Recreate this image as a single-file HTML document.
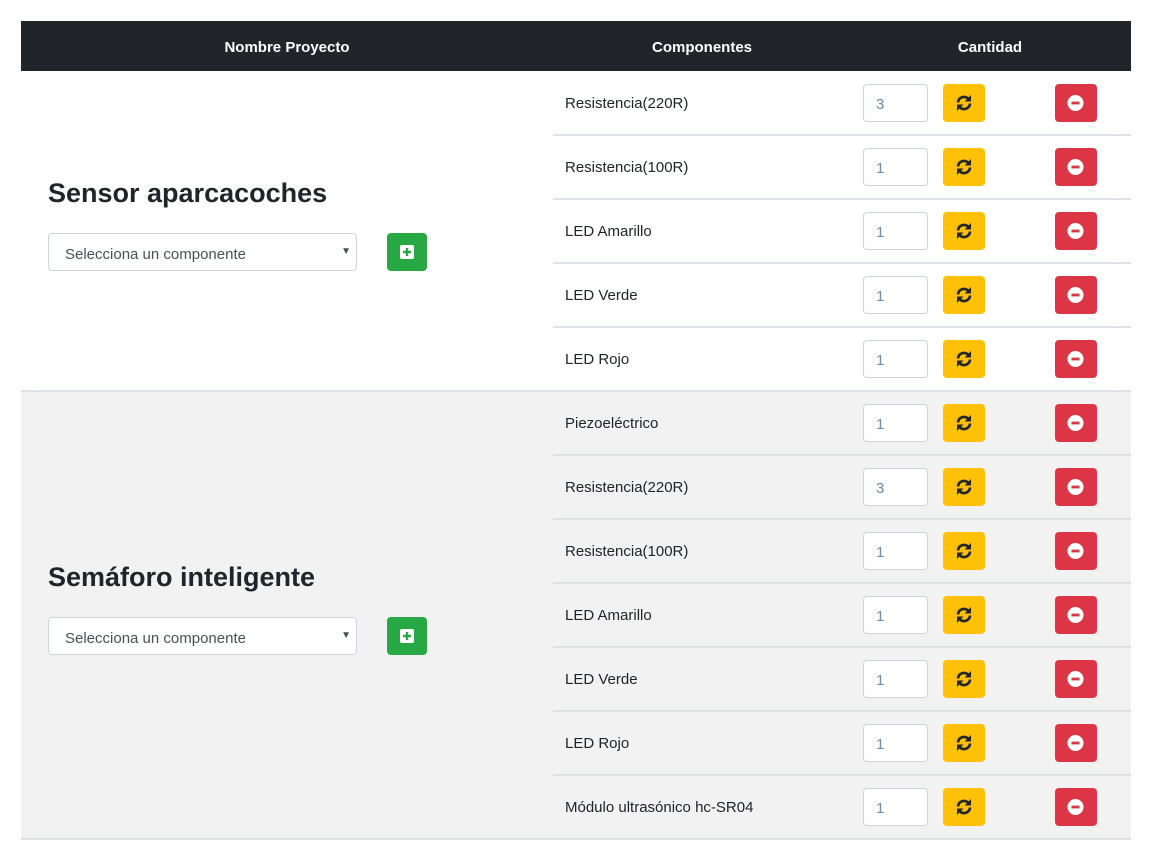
<!DOCTYPE html>
<html><head><meta charset="utf-8"><style>
body{margin:0;background:#fff;font-family:"Liberation Sans",sans-serif;color:#212529;}
.a{position:absolute}
.hd{left:21px;top:21px;width:1110px;height:50px;background:#212529;color:#fff;font-weight:bold;font-size:15px}
.hd span{position:absolute;top:18px;transform:translateX(-50%)}
.g2{left:21px;top:391px;width:1110px;height:448px;background:#f2f2f2}
.line{height:2px;background:#dee2e6}
.t{left:565px;font-size:15px}
.inp{left:863px;width:63px;height:36px;border:1px solid #ced4da;border-radius:4px;background:#fff;color:#6c8aa8;font-size:15px;box-sizing:content-box}
.inp span{position:absolute;left:12px;top:11px}
.ref{left:943px;width:42px;height:38px;background:#ffc107;border-radius:4px}
.del{left:1055px;width:42px;height:38px;background:#dc3545;border-radius:4px}
.ref svg,.del svg{position:absolute;left:12px;top:11px}
h2{position:absolute;left:48px;margin:0;font-size:27px;font-weight:bold;color:#212529}
.sel{left:48px;width:307px;height:36px;border:1px solid #ced4da;border-radius:4px;background:#fff;font-size:15px;color:#495057}
.sel span{position:absolute;left:16px;top:12px}
.sel i{position:absolute;right:5px;top:12px;font-style:normal;font-size:10px}
.add{left:387px;width:40px;height:38px;background:#28a745;border-radius:4px}
.add svg{position:absolute;left:13px;top:12px}
</style></head><body>
<div class="a hd"><span style="left:266px">Nombre Proyecto</span><span style="left:681px">Componentes</span><span style="left:969px">Cantidad</span></div>
<div class="a g2"></div>
<div class="a line" style="left:21px;top:390px;width:1110px"></div>
<div class="a line" style="left:21px;top:838px;width:1110px"></div>
<div id="rows"></div>
<h2 style="top:178px">Sensor aparcacoches</h2>
<div class="a sel" style="top:233px"><span>Selecciona un componente</span><i>▼</i></div>
<div class="a add" style="top:233px"><svg width="14" height="14" viewBox="0 0 14 14"><rect width="14" height="14" rx="2" fill="#fff"/><path d="M7 3v8M3 7h8" stroke="#28a745" stroke-width="2.4"/></svg></div>
<h2 style="top:562px">Semáforo inteligente</h2>
<div class="a sel" style="top:617px"><span>Selecciona un componente</span><i>▼</i></div>
<div class="a add" style="top:617px"><svg width="14" height="14" viewBox="0 0 14 14"><rect width="14" height="14" rx="2" fill="#fff"/><path d="M7 3v8M3 7h8" stroke="#28a745" stroke-width="2.4"/></svg></div>
<script>
var items=[["Resistencia(220R)",3],["Resistencia(100R)",1],["LED Amarillo",1],["LED Verde",1],["LED Rojo",1],["Piezoeléctrico",1],["Resistencia(220R)",3],["Resistencia(100R)",1],["LED Amarillo",1],["LED Verde",1],["LED Rojo",1],["Módulo ultrasónico hc-SR04",1]];
var h="";
items.forEach(function(it,i){var y=71+i*64;
h+='<div class="a t" style="top:'+(y+24)+'px">'+it[0]+'</div>';
h+='<div class="a inp" style="top:'+(y+13)+'px"><span>'+it[1]+'</span></div>';
h+='<div class="a ref" style="top:'+(y+13)+'px"><svg width="18" height="16" viewBox="0 0 18 16"><path d="M3 7.5A6 6 0 0 1 13.5 4" fill="none" stroke="#212529" stroke-width="2.6"/><path d="M16 0v6.5h-6.5z" fill="#212529"/><path d="M15 8.5A6 6 0 0 1 4.5 12" fill="none" stroke="#212529" stroke-width="2.6"/><path d="M2 16v-6.5h6.5z" fill="#212529"/></svg></div>';
h+='<div class="a del" style="top:'+(y+13)+'px"><svg width="17" height="16" viewBox="0 0 17 16"><circle cx="8.5" cy="8" r="8" fill="#fff"/><rect x="4.5" y="6.6" width="8" height="2.8" fill="#dc3545"/></svg></div>';
if(i!=4&&i!=11)h+='<div class="a line" style="left:553px;top:'+(y+63)+'px;width:578px"></div>';
});
document.getElementById("rows").innerHTML=h;
</script>
</body></html>
